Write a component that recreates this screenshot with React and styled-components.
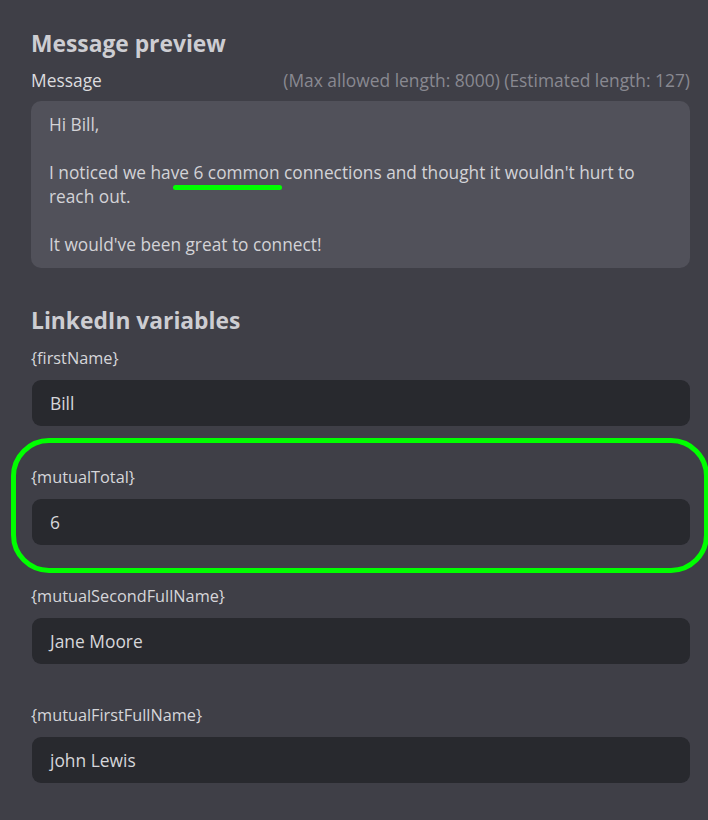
import React from 'react';
import styled, { createGlobalStyle } from 'styled-components';

const GlobalStyle = createGlobalStyle`
  html, body {
    margin: 0;
    padding: 0;
    background: #3f3f47;
  }
  body {
    font-family: 'Open Sans', 'Liberation Sans', sans-serif;
    color: #d6d6da;
  }
`;

const Page = styled.div`
  width: 708px;
  min-height: 820px;
  box-sizing: border-box;
  padding: 28px 18px 0 31px;
  background: #3f3f47;
  overflow: hidden;
`;

const Heading = styled.h2`
  margin: 0 0 ${(p) => p.gap || 6}px;
  font-size: 22.8px;
  font-weight: 700;
  line-height: 32px;
  color: #cdcdd2;
`;

const LabelRow = styled.div`
  display: flex;
  justify-content: space-between;
  align-items: center;
  height: 24px;
  margin-bottom: 9px;
`;

const Label = styled.span`
  color: #dcdcdf;
  font-size: 17.4px;
`;

const Hint = styled.span`
  color: #898991;
  font-size: 17.4px;
  white-space: nowrap;
`;

const MessageBox = styled.div`
  width: 659px;
  box-sizing: border-box;
  padding: 12px 18px 11px;
  background: #51515a;
  border-radius: 10px;
  font-size: 17.3px;
  line-height: 24px;
  color: #d3d3d7;
  margin-bottom: 37px;
`;

const Line = styled.div`
  min-height: 24px;
`;

const Marked = styled.span`
  position: relative;
  &::after {
    content: '';
    position: absolute;
    left: 2px;
    right: -2px;
    bottom: -6px;
    height: 5px;
    border-radius: 3px;
    background: #00ff00;
  }
`;

const Field = styled.div`
  position: relative;
  display: flex;
  flex-direction: column;
  width: 658px;
  margin-left: 1px;
  margin-bottom: ${(p) => p.gap}px;
`;

const FieldLabel = styled.div`
  height: 24px;
  line-height: 24px;
  font-size: 16.3px;
  color: #d6d6da;
  margin-bottom: 10px;
  margin-left: -1px;
`;

const Input = styled.div`
  height: 46px;
  display: flex;
  align-items: center;
  box-sizing: border-box;
  padding: 0 18px;
  border-radius: 9px;
  background: #28292e;
  font-size: 17.4px;
  color: #d6d6da;
`;

const Highlight = styled.div`
  position: absolute;
  top: -27px;
  bottom: -28px;
  left: -21px;
  right: -19px;
  border: 5px solid #00ff00;
  border-radius: 38px;
  pointer-events: none;
`;

const fields = [
  { name: '{firstName}', value: 'Bill', gap: 39 },
  { name: '{mutualTotal}', value: '6', gap: 39, highlight: true },
  { name: '{mutualSecondFullName}', value: 'Jane Moore', gap: 39 },
  { name: '{mutualFirstFullName}', value: 'john Lewis', gap: 0 },
];

export default function App() {
  return (
    <Page>
      <GlobalStyle />
      <Heading gap={8}>Message preview</Heading>
      <LabelRow>
        <Label>Message</Label>
        <Hint>(Max allowed length: 8000) (Estimated length: 127)</Hint>
      </LabelRow>
      <MessageBox>
        <Line>Hi Bill,</Line>
        <Line />
        <Line>
          I noticed we ha<Marked>ve 6 common</Marked> connections and thought
          it wouldn't hurt to reach out.
        </Line>
        <Line />
        <Line>It would've been great to connect!</Line>
      </MessageBox>
      <Heading gap={9}>LinkedIn variables</Heading>
      {fields.map((f) => (
        <Field key={f.name} gap={f.gap}>
          {f.highlight && <Highlight />}
          <FieldLabel>{f.name}</FieldLabel>
          <Input>{f.value}</Input>
        </Field>
      ))}
    </Page>
  );
}
